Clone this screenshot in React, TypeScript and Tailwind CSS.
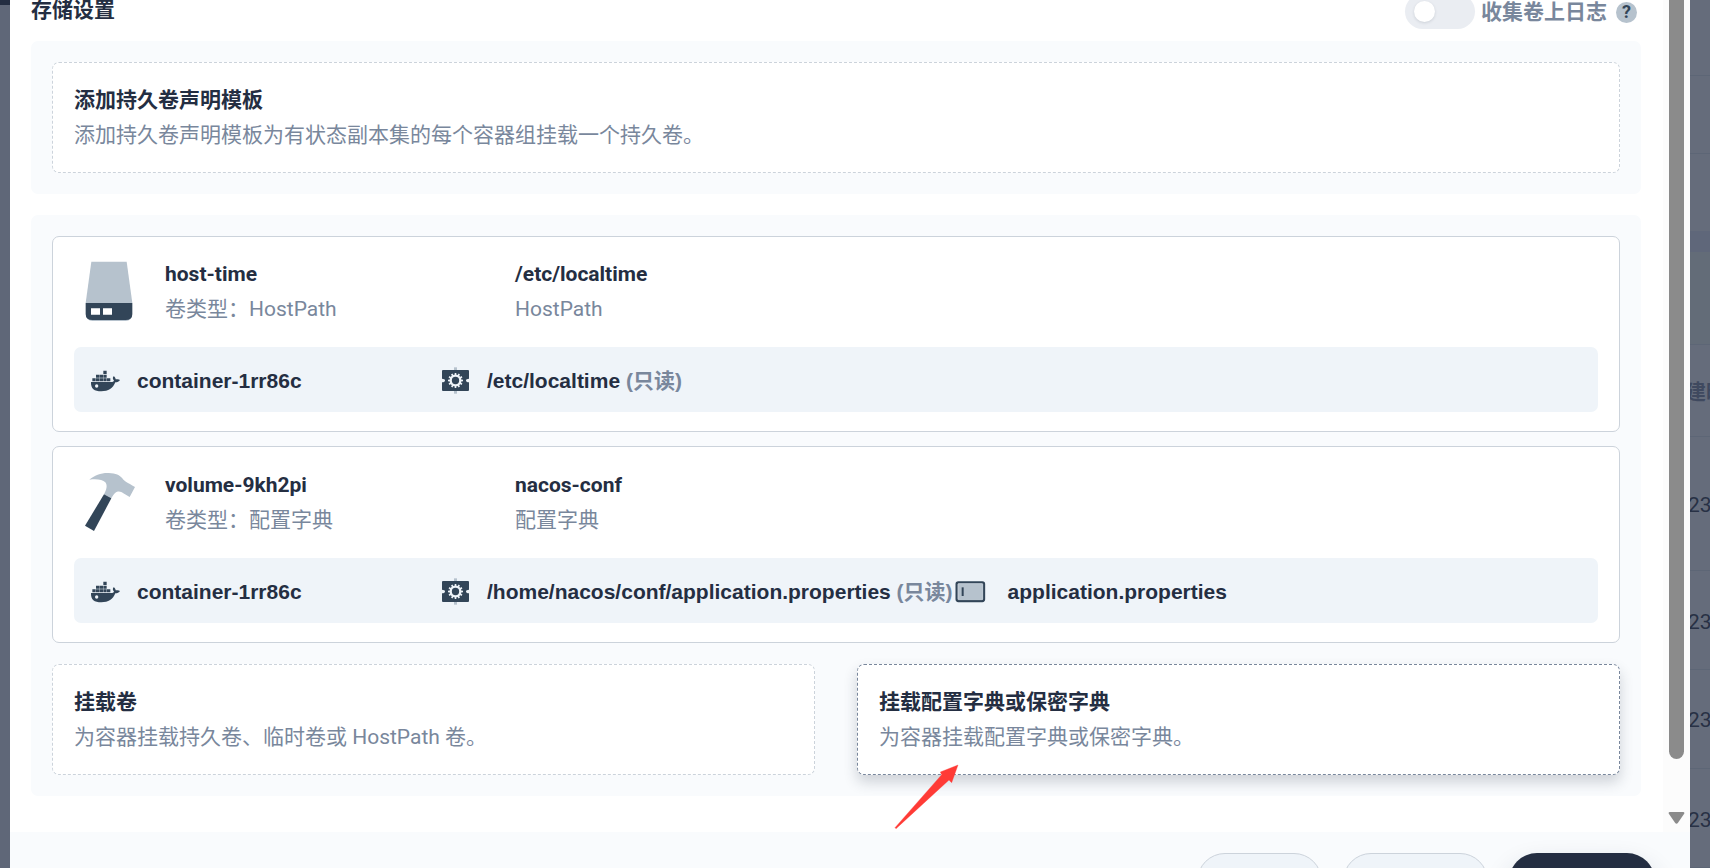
import React from "react";

const family = "font-['Roboto','Noto_Sans_CJK_SC',sans-serif]";
const barFamily = "font-['Liberation_Sans','Noto_Sans_CJK_SC',sans-serif]";

function DiskIcon() {
  return (
    <svg className="h-[70px] w-[70px] shrink-0" viewBox="102 96 210 210">
      <path d="M154 110H260L277 234H137Z" fill="#b6c2cd" />
      <path d="M137 268Q139 288 158 288H257Q275 288 277 268Z" fill="#b6c2cd" />
      <path d="M137 234H277V266Q277 285 257 285H157Q137 285 137 266Z" fill="#324558" />
      <path d="M153 250H180V269H153ZM189 250H216V269H189Z" fill="#fff" />
    </svg>
  );
}

function HammerIcon() {
  return (
    <svg className="h-[70px] w-[70px] shrink-0" viewBox="102 99 210 210">
      <path
        d="M148 134C163 121 185 113 206 114C228 115 239 120 247 130C251 138 262 143 285 156L269 186L250 175C239 166 226 166 214 190L192 178C200 164 203 151 196 142C188 133 168 131 148 134Z"
        fill="#b6c2cd"
      />
      <path d="M192 178L214 190L162 288L135 272Z" fill="#324558" />
    </svg>
  );
}

function DockerIcon() {
  return (
    <svg className="h-[35px] w-[35px] shrink-0" viewBox="141 412 105 105" fill="#324558">
      <path d="M190 435h10v10h-10zM168 447h10v9h-10zM179 447h10v9h-10zM190 447h10v9h-10zM157 458h10v9h-10zM168 458h10v9h-10zM179 458h10v9h-10zM190 458h10v9h-10zM201 458h10v9h-10z" />
      <path d="M153 469H213C218 469 221 467 222 465C217 460 218 455 221 452C225 454 227 458 227 461C232 460 237 460 240 463C237 468 232 470 226 470C219 488 205 497 184 497C163 497 152 489 153 469Z" />
      <circle cx="170" cy="481" r="5" fill="#eff4f9" />
    </svg>
  );
}

const teeth = [0, 30, 60, 90, 120, 150, 180, 210, 240, 270, 300, 330];

function MountIcon() {
  return (
    <svg className="h-[35px] w-[35px] shrink-0" viewBox="54 69 105 105">
      <path d="M102 82h9v79h-9z" fill="#b6c2cd" />
      <path
        d="M69 90H144Q147 90 147 93V116Q138 116 138 121.500Q138 127 147 127V150Q147 153 144 153H69Q66 153 66 150V127Q75 127 75 121.500Q75 116 66 116V93Q66 90 69 90Z"
        fill="#324558"
      />
      <circle cx="106.500" cy="121.500" r="14.500" fill="none" stroke="#eff4f9" strokeWidth="7" />
      {teeth.map((a) => (
        <path key={a} d="M104 99h5v7h-5z" fill="#eff4f9" transform={`rotate(${a} 106.500 121.500)`} />
      ))}
    </svg>
  );
}

function KeyIcon() {
  return (
    <svg className="h-[35px] w-[35px] shrink-0" viewBox="280 42 105 105">
      <rect x="291" y="67" width="82" height="56" rx="5" fill="#b6c2cd" stroke="#324558" strokeWidth="7" />
      <rect x="295" y="71" width="74" height="48" rx="2" fill="none" stroke="#d5dde5" strokeWidth="2" />
      <path d="M306 82h6v26h-6z" fill="#324558" />
    </svg>
  );
}

function Pair({ title, text }: { title: string; text: string }) {
  return (
    <div className="flex flex-col">
      <p className="h-[35px] font-bold leading-[35px] text-[#242e42]">{title}</p>
      <p className="h-[35px] leading-[35px] text-[#79879c]">{text}</p>
    </div>
  );
}

function AddCard({ title, text, active = false }: { title: string; text: string; active?: boolean }) {
  return (
    <div
      className={`flex h-[111px] flex-1 flex-col rounded-[7px] border border-dashed bg-white pl-[21px] pt-5 ${
        active ? "border-[#79879c] shadow-[0_7px_14px_0_rgba(36,46,66,0.2)]" : "border-[#ccd3db]"
      }`}
    >
      <Pair title={title} text={text} />
    </div>
  );
}

type VolumeProps = {
  icon: React.ReactNode;
  name: string;
  type: string;
  source: string;
  sourceType: string;
  path: string;
  subPath?: string;
  className: string;
};

function VolumeCard({ icon, name, type, source, sourceType, path, subPath, className }: VolumeProps) {
  return (
    <div className={`flex flex-col rounded-[7px] border border-[#ccd3db] bg-white px-[21px] ${className}`}>
      <div className="flex h-[70px]">
        {icon}
        <div className="ml-[21px] w-[350px]">
          <Pair title={name} text={type} />
        </div>
        <Pair title={source} text={sourceType} />
      </div>
      <div
        className={`mt-5 flex h-[65px] items-center rounded-[7px] bg-[#eff4f9] pl-[13px] pt-[2px] font-bold leading-[31px] text-[#242e42] ${barFamily}`}
      >
        <div className="flex w-[351px] items-center gap-[15px]">
          <DockerIcon />
          <span>container-1rr86c</span>
        </div>
        <div className="flex items-center">
          <MountIcon />
          <span className="ml-[14px] whitespace-pre">
            {path} <span className="text-[#79879c]">(只读)</span>
          </span>
        </div>
        {subPath && (
          <div className="flex items-center gap-[20px]">
            <KeyIcon />
            <span>{subPath}</span>
          </div>
        )}
      </div>
    </div>
  );
}

function BackdropRow({ text, className }: { text?: string; className: string }) {
  return (
    <div className={`flex items-center overflow-hidden border-b border-[#5d6676] pt-1 ${className}`}>
      {text && <span className="-ml-[2px] shrink-0 whitespace-nowrap">{text}</span>}
    </div>
  );
}

export default function App() {
  return (
    <div className={`relative flex h-[868px] w-[1710px] overflow-hidden bg-[#656c7b] text-[21px] ${family}`}>
      <div className="w-[10px] bg-[#5f6778]">
        <div className="h-[5px] bg-[#242e42]" />
      </div>

      <div className="flex w-[1680px] flex-col bg-white">
        <div className="flex h-[832px]">
          <div className="w-[1653px] pl-[21px] pr-[22px]">
            <div className="flex h-[41px] items-start justify-between">
              <h2 className="-mt-[5px] font-bold leading-[30px] text-[#242e42]">存储设置</h2>
              <div className="-mt-px flex items-center pr-1">
                <div className="-mt-[6px] flex h-[35px] w-[70px] items-center rounded-full bg-[#eaedf2] pl-[9px]">
                  <div className="h-[21px] w-[21px] rounded-full bg-white shadow-[0_1px_3px_rgba(36,46,66,0.15)]" />
                </div>
                <span className="-mt-[4px] ml-[6px] font-bold leading-[35px] text-[#79879c]">收集卷上日志</span>
                <span className="-mt-[5px] ml-[9px] flex h-[21px] w-[21px] items-center justify-center rounded-full bg-[#b6c2cd] text-[18px] font-bold leading-none text-[#324558]">
                  ?
                </span>
              </div>
            </div>

            <section className="flex h-[153px] rounded-[7px] bg-[#f9fbfd] px-[21px] pt-[21px]">
              <AddCard title="添加持久卷声明模板" text="添加持久卷声明模板为有状态副本集的每个容器组挂载一个持久卷。" />
            </section>

            <section className="mt-[21px] h-[581px] rounded-[7px] bg-[#f9fbfd] px-[21px] pt-[21px]">
              <VolumeCard
                icon={<DiskIcon />}
                name="host-time"
                type="卷类型：HostPath"
                source="/etc/localtime"
                sourceType="HostPath"
                path="/etc/localtime"
                className="h-[196px] pt-5"
              />
              <VolumeCard
                icon={<HammerIcon />}
                name="volume-9kh2pi"
                type="卷类型：配置字典"
                source="nacos-conf"
                sourceType="配置字典"
                path="/home/nacos/conf/application.properties"
                subPath="application.properties"
                className="mt-[14px] h-[197px] pt-[21px]"
              />
              <div className="mt-[21px] flex gap-[42px]">
                <AddCard title="挂载卷" text="为容器挂载持久卷、临时卷或 HostPath 卷。" />
                <AddCard title="挂载配置字典或保密字典" text="为容器挂载配置字典或保密字典。" active />
              </div>
            </section>
          </div>

          <div className="flex w-[27px] flex-col bg-[#fcfcfc]">
            <div className="ml-[6px] h-[759px] w-[15px] rounded-b-full bg-[#8b8b8b]" />
            <svg className="ml-[5px] mt-[53px] h-[12px] w-[17px]" viewBox="0 0 17 12">
              <path d="M1.500 0H15.500Q17 .5 16 2L10 10.800Q8.500 12.800 7 10.800L1 2Q0 .5 1.500 0Z" fill="#8b8b8b" />
            </svg>
          </div>
        </div>

        <footer className="flex h-[36px] justify-end gap-[21px] overflow-hidden bg-[#f9fbfd] pr-[35px] pt-[21px]">
          <div className="h-[56px] w-[125px] rounded-full border border-[#ccd3db] bg-[#eff4f9]" />
          <div className="h-[56px] w-[145px] rounded-full border border-[#ccd3db] bg-[#eff4f9]" />
          <div className="h-[56px] w-[146px] rounded-full bg-[#242e42] shadow-[0_14px_28px_0_rgba(36,46,66,0.2)]" />
        </footer>
      </div>

      <div className="flex w-[20px] flex-col overflow-hidden bg-[#656c7b] text-[#283145]">
        <BackdropRow className="h-[76px]" />
        <BackdropRow className="h-[78px]" />
        <div className="h-[77px]" />
        <div className="h-[21px] bg-[#5f677a]" />
        <BackdropRow className="h-[93px] bg-[#636c78]" />
        <BackdropRow className="h-[93px] font-bold text-[#3f495f] [&>span]:-ml-[5px]" text="建时" />
        <BackdropRow className="h-[134px]" text="23" />
        <BackdropRow className="h-[99px]" text="23" />
        <BackdropRow className="h-[99px]" text="23" />
        <BackdropRow className="h-[99px] pt-[6px]" text="23" />
      </div>

      <svg className="absolute left-[893px] top-[763px] h-[68px] w-[68px]" viewBox="99 609 204 204">
        <path
          d="M294 615L275 668L267 660L108 806L105 803L245 644L241 636Z"
          fill="#ff3b36"
          stroke="#ff3b36"
          strokeWidth="1"
          strokeLinejoin="round"
        />
      </svg>
    </div>
  );
}
